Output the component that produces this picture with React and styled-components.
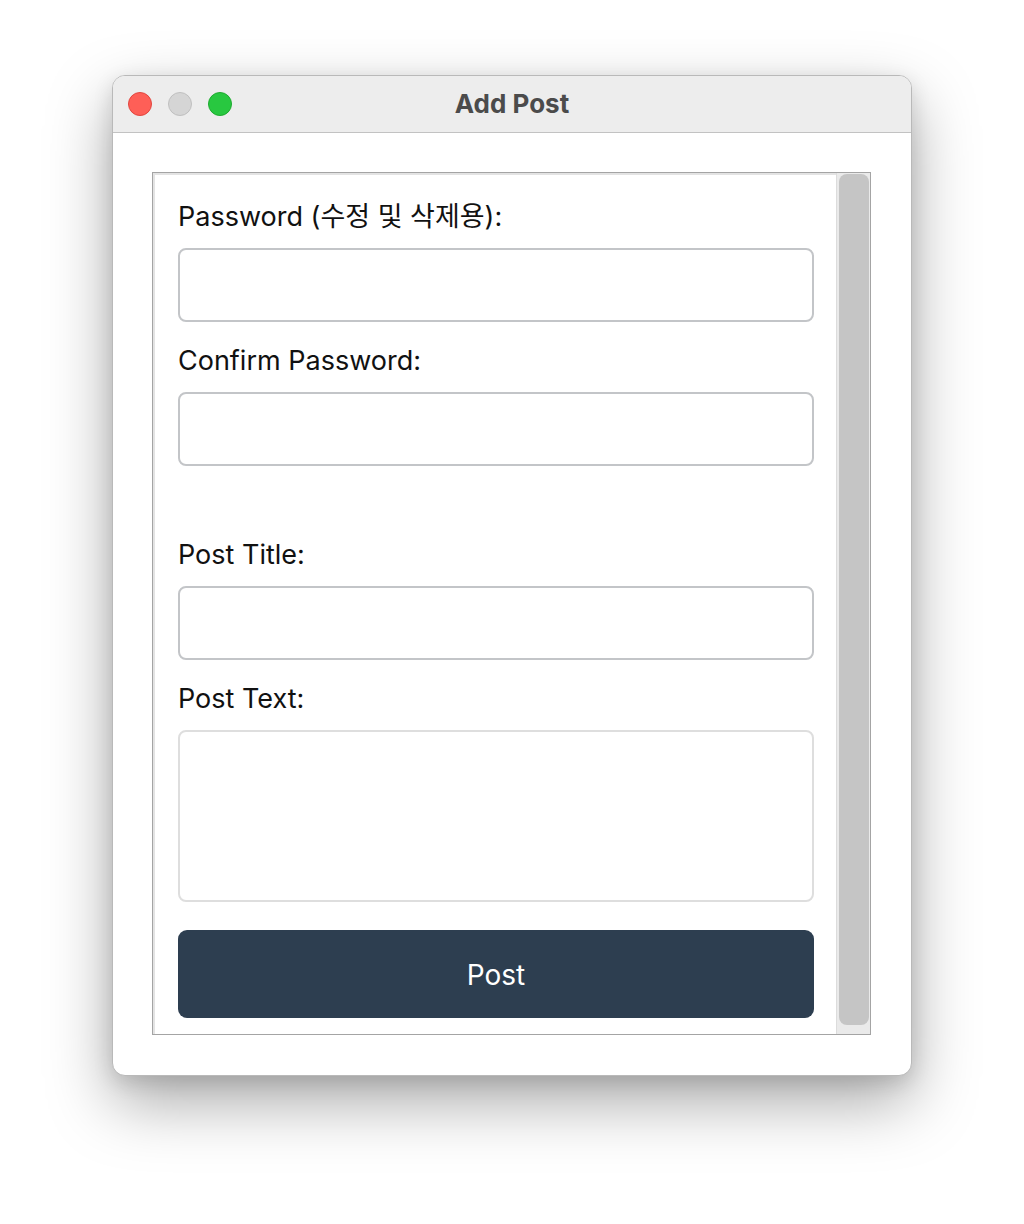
import React from 'react';
import styled, { createGlobalStyle } from 'styled-components';

const GlobalStyle = createGlobalStyle`
  html, body {
    margin: 0;
    padding: 0;
    background: #ffffff;
  }
  body {
    font-family: Inter, "Liberation Sans", "Noto Sans CJK KR", sans-serif;
  }
  * {
    box-sizing: border-box;
  }
`;

const Page = styled.div`
  width: 1024px;
  height: 1224px;
  padding-top: 75px;
  display: flex;
  justify-content: center;
  align-items: flex-start;
`;

const Window = styled.div`
  width: 800px;
  height: 1001px;
  display: flex;
  flex-direction: column;
  background: #ffffff;
  border: 1px solid #b9b9b9;
  border-radius: 13px;
  overflow: hidden;
  box-shadow: 0 26px 64px rgba(0, 0, 0, 0.34), 0 6px 20px rgba(0, 0, 0, 0.12);
`;

const TitleBar = styled.div`
  height: 57px;
  flex-shrink: 0;
  display: grid;
  grid-template-columns: 1fr auto 1fr;
  align-items: center;
  padding: 0 15px;
  background: #ededed;
  border-bottom: 1px solid #c2c2c2;
`;

const Lights = styled.div`
  display: flex;
  gap: 16px;
`;

const Light = styled.span`
  width: 24px;
  height: 24px;
  border-radius: 50%;
  background: ${p => p.bg};
  border: 1px solid ${p => p.edge};
`;

const Title = styled.div`
  font-family: Inter, "Liberation Sans", sans-serif;
  font-weight: 700;
  font-size: 26px;
  color: #4b4b4b;
  margin-top: -2px;
`;

const Body = styled.div`
  flex: 1;
  padding: 39px 40px 40px 39px;
  display: flex;
`;

const Frame = styled.div`
  flex: 1;
  display: flex;
  border: 1px solid #a4a4a4;
`;

const Pane = styled.div`
  flex: 1;
  border-top: 2px solid #e3e3e3;
  border-left: 2px solid #e3e3e3;
  padding: 24px 22px 0 23px;
  display: flex;
  flex-direction: column;
  overflow: hidden;
`;

const Label = styled.label`
  display: block;
  font-size: 27px;
  line-height: 34px;
  padding-top: 1px;
  color: #111111;
  margin-bottom: 14px;
  font-family: Inter, "Liberation Sans", "Noto Sans CJK KR", sans-serif;
`;

const Input = styled.input`
  display: block;
  width: 100%;
  height: 74px;
  border: 2px solid #c3c5c8;
  border-radius: 8px;
  background: #ffffff;
  margin: 0 0 ${p => (p.gap ? p.gap : 21)}px;
  padding: 0 14px;
  font-size: 26px;
  outline: none;
`;

const TextArea = styled.textarea`
  display: block;
  width: 100%;
  height: 172px;
  border: 2px solid #dedede;
  border-radius: 8px;
  margin: 0 0 28px;
  padding: 12px 14px;
  resize: none;
  font-size: 26px;
  outline: none;
`;

const PostButton = styled.button`
  width: 100%;
  height: 88px;
  flex-shrink: 0;
  border: none;
  border-radius: 9px;
  background: #2d3e50;
  color: #ffffff;
  font-family: Inter, "Liberation Sans", sans-serif;
  font-size: 28px;
  padding-top: 2px;
  cursor: pointer;
`;

const Track = styled.div`
  width: 34px;
  flex-shrink: 0;
  background: #eaeaea;
  border-left: 1px solid #dcdcdc;
  padding: 1px 1px 9px 2px;
  display: flex;
`;

const Thumb = styled.div`
  flex: 1;
  background: #c5c5c5;
  border-radius: 8px;
`;

export default function App() {
  return (
    <>
      <GlobalStyle />
      <Page>
        <Window>
          <TitleBar>
            <Lights>
              <Light bg="#fe5f57" edge="#e2463f" />
              <Light bg="#d5d5d5" edge="#c0c0c0" />
              <Light bg="#28c840" edge="#1eab2f" />
            </Lights>
            <Title>Add Post</Title>
            <span />
          </TitleBar>
          <Body>
            <Frame>
              <Pane>
                <Label>Password (수정 및 삭제용):</Label>
                <Input type="password" />
                <Label>Confirm Password:</Label>
                <Input type="password" gap={71} />
                <Label>Post Title:</Label>
                <Input type="text" />
                <Label>Post Text:</Label>
                <TextArea />
                <PostButton>Post</PostButton>
              </Pane>
              <Track>
                <Thumb />
              </Track>
            </Frame>
          </Body>
        </Window>
      </Page>
    </>
  );
}
